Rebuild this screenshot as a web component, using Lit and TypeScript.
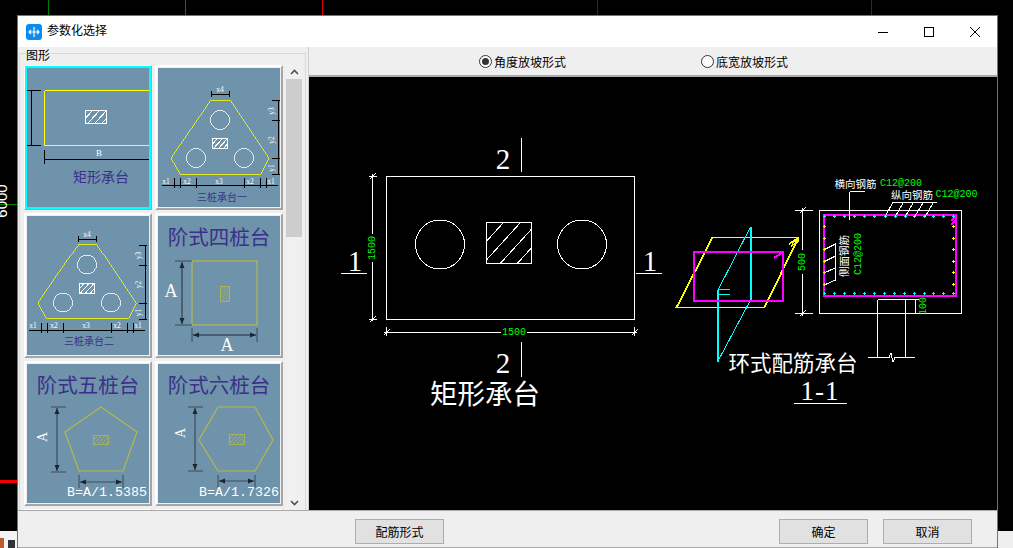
import {css, html, LitElement, svg} from 'lit';
import {customElement, state} from 'lit/decorators.js';

const WHITE = '#fff';
const YELLOW = '#ffff00';
const DIM_YELLOW = '#b4b84c';
const DARK = '#3a4c5a';
const INK = '#3b3189';
const GREEN = '#00ff00';
const CYAN = '#00ffff';
const MAGENTA = '#ff00ff';

const line = (x1: number, y1: number, x2: number, y2: number, c = WHITE, w = 1) =>
  svg`<line x1=${x1} y1=${y1} x2=${x2} y2=${y2} stroke=${c} stroke-width=${w}></line>`;

const box = (x: number, y: number, w: number, h: number, c = WHITE, sw = 1) =>
  svg`<rect x=${x} y=${y} width=${w} height=${h} fill="none" stroke=${c} stroke-width=${sw}></rect>`;

const poly = (points: string, c = WHITE, sw = 1) =>
  svg`<polygon points=${points} fill="none" stroke=${c} stroke-width=${sw}></polygon>`;

const circle = (cx: number, cy: number, r: number, c = WHITE, sw = 1) =>
  svg`<circle cx=${cx} cy=${cy} r=${r} fill="none" stroke=${c} stroke-width=${sw}></circle>`;

// nested svg clips the diagonals to the section rectangle
function hatch(x: number, y: number, w: number, h: number, step: number, c = WHITE, sw = 1) {
  const lines = [];
  for (let i = step; i < w + h; i += step) {
    lines.push(line(i, 0, i - h, h * 1.1, c, sw));
  }
  return svg`<svg x=${x} y=${y} width=${w} height=${h}>${lines}</svg>${box(x, y, w, h, c, sw)}`;
}

const label = (x: number, y: number, text: string, size: number, c: string, cls = 'cjk', rot = false) =>
  svg`<text class=${cls} x=${x} y=${y} font-size=${size} fill=${c} text-anchor="middle" dominant-baseline="central"
    transform=${rot ? `rotate(-90 ${x} ${y})` : ''}>${text}</text>`;

const arrow = (x: number, y: number, dir: 'u' | 'd' | 'l' | 'r') => {
  const p = {
    u: `${x},${y} ${x - 2.5},${y + 6} ${x + 2.5},${y + 6}`,
    d: `${x},${y} ${x - 2.5},${y - 6} ${x + 2.5},${y - 6}`,
    l: `${x},${y} ${x + 6},${y - 2.5} ${x + 6},${y + 2.5}`,
    r: `${x},${y} ${x - 6},${y - 2.5} ${x - 6},${y + 2.5}`,
  }[dir];
  return svg`<polygon points=${p} fill="#1c2630"></polygon>`;
};

const rectTile = svg`
  <g class="crisp">
    ${line(17.5, 22.5, 122, 22.5, YELLOW)}${line(17.5, 22.5, 17.5, 77.5, YELLOW)}${line(17.5, 77.5, 122, 77.5, YELLOW)}
    ${line(0, 22.5, 14, 22.5, '#000')}${line(0, 77.5, 14, 77.5, '#000')}${line(4.5, 22.5, 4.5, 77.5, '#000')}
    ${line(17.5, 82, 17.5, 96, '#000')}${line(17.5, 91.5, 122, 91.5, '#000')}
    ${hatch(58.5, 42.5, 21, 13, 7)}
  </g>
  ${label(72, 85, 'B', 9, WHITE, 'latin')}
  ${label(74, 108, '矩形承台', 14, INK)}
`;

// tiles 2 and 3 share the same three pile plan
const threePile = (title: string, dx: number, dy: number) => svg`
  <g transform="translate(${dx} ${dy})">
    <g class="crisp">
      ${poly('53,32 72,32 111,90 103,106 22,106 13,90', YELLOW, 0.8)}
      ${circle(62, 52, 9.5, WHITE, 0.8)}${circle(38, 90, 9.5, WHITE, 0.8)}${circle(86, 90, 9.5, WHITE, 0.8)}
      ${hatch(54.5, 70.5, 15, 10, 5)}
      ${line(53.5, 26.5, 71.5, 26.5, '#000')}${line(53.5, 23, 53.5, 29, '#000')}${line(71.5, 23, 71.5, 29, '#000')}
      ${line(120.5, 32, 120.5, 106, '#000')}
      ${[32.5, 52.5, 90.5, 106.5].map(y => line(114, y, 122, y, '#000'))}
      ${line(4, 117.5, 120, 117.5, '#000')}
      ${[16.5, 22.5, 38.5, 86.5, 102.5, 108.5].map(x => line(x, 110, x, 120, '#000'))}
    </g>
    ${label(62, 21.5, 'x4', 7.5, WHITE, 'latin')}
    ${label(113.5, 43, 'y3', 7.5, WHITE, 'latin', true)}${label(113.5, 72, 'y2', 7.5, WHITE, 'latin', true)}${label(113.5, 100, 'y1', 7.5, WHITE, 'latin', true)}
    ${label(8, 113, 'x1', 7.5, WHITE, 'latin')}${label(29, 113, 'x2', 7.5, WHITE, 'latin')}${label(61, 113, 'x3', 7.5, WHITE, 'latin')}
    ${label(92, 113, 'x2', 7.5, WHITE, 'latin')}${label(113, 113, 'x1', 7.5, WHITE, 'latin')}
    ${label(64, 128, title, 10, INK)}
  </g>
`;

const stepFour = svg`
  ${label(61, 20, '阶式四桩台', 20.5, INK)}
  ${box(34, 45, 65, 64, DIM_YELLOW, 1.2)}
  ${hatch(62.5, 70.5, 9, 15, 3, DIM_YELLOW, 0.8)}
  ${line(17, 45, 34, 45, DARK)}${line(17, 109, 34, 109, DARK)}${line(24, 46, 24, 108, DARK, 1.4)}
  ${arrow(24, 46, 'u')}${arrow(24, 108, 'd')}
  ${line(34, 112, 34, 126, DARK)}${line(99, 112, 99, 126, DARK)}${line(35, 119, 98, 119, DARK, 1.4)}
  ${arrow(35, 119, 'l')}${arrow(98, 119, 'r')}
  ${label(13, 75, 'A', 18, WHITE, 'latin')}
  ${label(69, 129, 'A', 18, WHITE, 'latin')}
`;

const stepFive = svg`
  ${label(61, 20, '阶式五桩台', 20.5, INK)}
  ${poly('74,43 110,68 96,107 52,107 38,68', DIM_YELLOW, 1.2)}
  ${hatch(66.5, 71.5, 15, 9, 4, DIM_YELLOW, 0.8)}
  ${line(24, 43, 39, 43, DARK)}${line(24, 108, 39, 108, DARK)}${line(30, 44, 30, 107, DARK, 1.2)}
  ${arrow(30, 44, 'u')}${arrow(30, 107, 'd')}
  ${line(52, 111, 52, 124, DARK)}${line(96, 111, 96, 124, DARK)}${line(53, 118, 95, 118, DARK, 1.2)}
  ${arrow(53, 118, 'l')}${arrow(95, 118, 'r')}
  ${label(15, 73, 'A', 14, WHITE, 'latin', true)}
  ${label(80, 128, 'B=A/1.5385', 13.3, WHITE, 'mono')}
`;

const stepSix = svg`
  ${label(61, 20, '阶式六桩台', 20.5, INK)}
  ${poly('60,43 97,43 115,76 97,107 60,107 41,76', DIM_YELLOW, 1.2)}
  ${hatch(71.5, 70.5, 15, 10, 4, DIM_YELLOW, 0.8)}
  ${line(30, 43, 45, 43, DARK)}${line(30, 107, 45, 107, DARK)}${line(37, 44, 37, 106, DARK, 1.2)}
  ${arrow(37, 44, 'u')}${arrow(37, 106, 'd')}
  ${line(60, 111, 60, 124, DARK)}${line(97, 111, 97, 124, DARK)}${line(61, 117, 96, 117, DARK, 1.2)}
  ${arrow(61, 117, 'l')}${arrow(96, 117, 'r')}
  ${label(22, 69, 'A', 14, WHITE, 'latin', true)}
  ${label(81, 128, 'B=A/1.7326', 13.3, WHITE, 'mono')}
`;

const tiles = [
  rectTile,
  threePile('三桩承台一', 0, 0),
  threePile('三桩承台二', -2, -3.5),
  stepFour,
  stepFive,
  stepSix,
  svg``,
  svg``,
];

const dimTick = (x: number, y: number) => line(x - 3, y + 3, x + 3, y - 3);

const capPlan = svg`
  ${box(386.5, 176.5, 248, 143)}
  ${circle(440, 244.5, 24.5)}${circle(582, 244.5, 24.5)}
  ${hatch(486.5, 222.5, 45, 41, 17)}
  ${line(521.5, 138, 521.5, 172)}${line(521.5, 342, 521.5, 377)}
  ${line(341, 273.5, 367, 273.5)}${line(636, 273.5, 662, 273.5)}
  ${line(372.5, 174, 372.5, 321)}${line(369, 176.5, 377, 176.5)}${line(369, 319.5, 377, 319.5)}
  ${dimTick(372.5, 176.5)}${dimTick(372.5, 319.5)}
  ${line(384, 332.5, 637, 332.5)}${line(386.5, 327, 386.5, 336)}${line(634.5, 327, 634.5, 336)}
  ${dimTick(386.5, 332.5)}${dimTick(634.5, 332.5)}
  <rect x="367" y="234" width="11" height="28" fill="#000"></rect>
  <rect x="501" y="326" width="26" height="12" fill="#000"></rect>
`;

const capLabels = svg`
  ${label(372, 248, '1500', 10, GREEN, 'mono', true)}
  ${label(514, 332, '1500', 10, GREEN, 'mono')}
  ${label(503, 159, '2', 29, WHITE, 'latin')}
  ${label(503, 363, '2', 29, WHITE, 'latin')}
  ${label(355, 261, '1', 29, WHITE, 'latin')}
  ${label(650, 261, '1', 29, WHITE, 'latin')}
  ${label(485, 392, '矩形承台', 27.5, WHITE)}
`;

const topBars = [464, 493, 523, 553, 583, 613, 645, 675, 705, 733, 762, 790, 820, 850];
const bottomBars = [464, 493, 523, 553, 583, 613, 643, 673, 703, 733, 763, 790, 820, 850];
const sideBars = [170, 205, 238, 274, 307, 343];

const bar = (x: number, y: number, c: string) => svg`${line(x - 1.5, y, x + 1.5, y, c)}${line(x, y - 1.5, x, y + 1.5, c)}`;

const ringIso = svg`
  ${poly('712.5,237.5 798.5,237.5 764.5,307.5 676.5,307.5', YELLOW, 1.8)}
  ${line(789, 244, 798, 238, YELLOW, 1.5)}${line(791, 246, 799, 241, YELLOW, 1.5)}${line(792, 243, 798, 239, YELLOW, 1.5)}
  ${line(750.5, 227, 718, 290, CYAN)}${line(750.5, 227, 750.5, 301, CYAN, 2)}
  ${line(717.5, 290, 717.5, 362, CYAN, 2)}${line(717.5, 362, 750, 301, CYAN)}
  ${line(718, 289.5, 730, 289.5, CYAN, 1.5)}${line(718, 294.5, 730, 294.5, CYAN, 1.5)}
  ${box(694, 252, 89, 49, MAGENTA, 2)}
  ${line(774, 258, 782, 253, MAGENTA, 2)}
`;

const ringSection = svg`
  ${box(819.5, 210.5, 142, 103)}
  ${box(824, 215, 132, 81, MAGENTA, 2)}
  ${line(951, 221, 956, 216, MAGENTA, 2)}${line(951, 225, 956, 220, MAGENTA, 2)}
  ${topBars.map(x => bar(670 + x / 3, 216.5, CYAN))}
  ${bottomBars.map(x => bar(670 + x / 3, 293.5, CYAN))}
  ${sideBars.map(y => bar(824.5, 170 + y / 3, YELLOW))}
  ${sideBars.map(y => bar(953.5, 170 + y / 3, YELLOW))}
  ${line(877.5, 299.5, 905.5, 299.5)}${line(877.5, 299.5, 877.5, 357)}${line(905.5, 299.5, 905.5, 357)}
  ${line(868, 357.5, 889, 357.5)}${line(889, 357.5, 891, 353)}${line(891, 353, 893, 362)}${line(893, 362, 895, 357.5)}${line(895, 357.5, 915, 357.5)}
  ${line(802.5, 208, 802.5, 316)}${line(795, 210.5, 813, 210.5)}${line(795, 313.5, 813, 313.5)}
  ${dimTick(802.5, 210.5)}${dimTick(802.5, 313.5)}
  <rect x="796" y="250" width="13" height="24" fill="#000"></rect>
  ${line(915.5, 299, 915.5, 314)}${line(906, 299.5, 919, 299.5)}
  ${line(849.5, 220, 849.5, 191.5)}${line(849.5, 191.5, 865, 191.5)}
  ${line(892.5, 202.5, 937, 202.5)}
  ${[[668, 645], [700, 675], [730, 705], [760, 733], [790, 765]].map(([a, b]) => line(670 + a / 3, 202.5, 670 + b / 3, 217))}
  ${line(835.5, 243, 835.5, 280)}
  ${[[222, 238], [258, 274], [293, 308], [330, 344]].map(([a, b]) => line(835.5, 170 + a / 3, 825, 170 + b / 3))}
`;

const ringLabels = svg`
  ${label(855.5, 183, '横向钢筋', 10.5, WHITE)}
  ${label(901, 183, 'C12@200', 10, GREEN, 'mono')}
  ${label(912, 194, '纵向钢筋', 10.5, WHITE)}
  ${label(956.5, 194, 'C12@200', 10, GREEN, 'mono')}
  ${label(843.5, 256, '侧面钢筋', 10.5, WHITE, 'cjk', true)}
  ${label(858.5, 254, 'C12@200', 10, GREEN, 'mono', true)}
  ${label(802, 262, '500', 10, GREEN, 'mono', true)}
  ${label(923, 306, '100', 10, GREEN, 'mono', true)}
  ${label(793, 361, '环式配筋承台', 21.5, WHITE)}
  ${label(820, 391, '1-1', 27, WHITE, 'wide')}
`;

@customElement('app-root')
export class AppRoot extends LitElement {
  @state()
  private selected = 0;

  @state()
  private mode = 0;

  static override styles = css`
    :host {
      display: block;
      position: relative;
      width: 1013px;
      height: 548px;
      overflow: hidden;
      background: #000;
      font-family: 'Noto Sans CJK SC', 'Liberation Sans', sans-serif;
      font-size: 12px;
      color: #000;
    }

    .desktop {
      position: absolute;
      inset: 0;
    }

    .cjk {
      font-family: 'Noto Sans CJK SC', sans-serif;
    }

    .latin {
      font-family: 'Liberation Serif', serif;
    }

    .wide {
      font-family: 'Liberation Serif', serif;
      letter-spacing: 1px;
    }

    .mono {
      font-family: 'Liberation Mono', monospace;
    }

    .sans {
      font-family: 'Liberation Sans', sans-serif;
    }

    .crisp {
      shape-rendering: crispEdges;
    }

    .window {
      position: absolute;
      left: 17px;
      top: 15px;
      width: 981px;
      height: 533px;
      box-sizing: border-box;
      border: 1px solid #2f86c8;
      border-bottom: none;
      background: #efefef;
      display: flex;
      flex-direction: column;
    }

    .titlebar {
      flex: none;
      height: 31px;
      background: #fff;
      display: flex;
      align-items: center;
      padding-left: 8px;
      box-sizing: border-box;
    }

    .app-icon {
      flex: none;
      width: 16px;
      height: 16px;
      margin-right: 5px;
    }

    .title {
      flex: 1;
      font-size: 12px;
      line-height: 14px;
      padding-bottom: 4px;
    }

    .controls {
      display: flex;
      align-items: center;
      padding-right: 16px;
      gap: 34px;
    }

    .controls svg {
      display: block;
      width: 12px;
      height: 12px;
    }

    .main {
      flex: none;
      height: 463px;
      display: grid;
      grid-template-columns: 290px 1fr;
    }

    .left {
      display: flex;
      min-height: 0;
      padding: 6px 2px 0 1px;
    }

    .group {
      flex: 1;
      min-width: 0;
      position: relative;
      border: 1px solid #d9d9d9;
      border-bottom: none;
      display: flex;
      flex-direction: column;
      padding: 0 2px 0 4px;
    }

    .group-label {
      position: absolute;
      left: 6px;
      top: -6px;
      background: #efefef;
      font-size: 12px;
      line-height: 13px;
      padding-right: 1px;
    }

    .picker {
      flex: 1;
      min-height: 0;
      display: flex;
      margin-top: 11px;
    }

    .list {
      flex: none;
      width: 259px;
      height: 445px;
      overflow: hidden;
      display: grid;
      grid-template-columns: 128px 128px;
      grid-auto-rows: 145px;
      gap: 3px;
      align-content: start;
    }

    .tile {
      box-sizing: border-box;
      padding: 1px;
      border: 2px solid;
      border-color: #fff #a6a6a6 #a6a6a6 #fff;
      background: #efefef;
      cursor: pointer;
    }

    .plate {
      display: block;
      width: 122px;
      height: 139px;
      background: #6e93aa;
    }

    .tile.on .plate {
      box-shadow: 0 0 0 2px #00ffff;
    }

    .scrollbar {
      flex: none;
      width: 16px;
      margin-left: 3px;
      height: 445px;
      display: flex;
      flex-direction: column;
      background: #f0f0f0;
    }

    .scroll-btn {
      flex: none;
      height: 14px;
      display: flex;
      align-items: center;
      justify-content: center;
    }

    .thumb {
      flex: none;
      height: 158px;
      background: #cdcdcd;
    }

    .scroll-track {
      flex: 1;
    }

    .right {
      display: flex;
      flex-direction: column;
      min-width: 0;
      border-left: 1px solid #cfcfcf;
    }

    .modes {
      flex: none;
      height: 30px;
      box-sizing: border-box;
      display: flex;
      align-items: center;
      padding: 1px 0 0 170px;
      gap: 134px;
      border-bottom: 2px solid #a9a9a9;
      font-size: 12px;
    }

    .radio {
      display: flex;
      align-items: center;
      gap: 2px;
      width: 88px;
      white-space: nowrap;
      cursor: pointer;
    }

    .dot {
      flex: none;
      box-sizing: border-box;
      width: 13px;
      height: 13px;
      border-radius: 50%;
      border: 1px solid #333;
      background: #fff;
      display: flex;
      align-items: center;
      justify-content: center;
    }

    .radio.on .dot::after {
      content: '';
      width: 7px;
      height: 7px;
      border-radius: 50%;
      background: #333;
    }

    .canvas {
      flex: 1;
      min-height: 0;
      display: block;
      width: 688px;
      background: #000;
    }

    .footer {
      flex: 1;
      border-top: 1px solid #a9a9a9;
      border-bottom: 1px solid #a9a9a9;
      display: flex;
      align-items: flex-start;
      padding: 8px 0 0 337px;
    }

    .footer button {
      width: 89px;
      height: 25px;
      box-sizing: border-box;
      border: 1px solid #adadad;
      background: #e1e1e1;
      font: inherit;
      font-size: 12px;
      color: #000;
      padding: 0;
    }

    .footer .ok {
      margin-left: 335px;
    }

    .footer .cancel {
      margin-left: 15px;
    }
  `;

  private renderDesktop() {
    return html`<svg class="desktop" width="1013" height="548" viewBox="0 0 1013 548">
      <g class="crisp">
        ${line(48.5, 0, 48.5, 15, '#008000')}${line(185.5, 0, 185.5, 15, '#008000')}
        ${line(322.5, 0, 322.5, 15, '#e00000')}${line(597.5, 0, 597.5, 15, '#900000')}${line(871.5, 0, 871.5, 15, '#900000')}
        ${line(0, 204.5, 17, 204.5, '#008000')}
        ${line(0, 481, 17, 481, '#f00000', 3)}
        <rect x="0" y="531" width="17" height="17" fill="#f4f4f4"></rect>
        <rect x="998" y="531" width="15" height="17" fill="#efefef"></rect>
      </g>
      <rect x="0" y="538" width="4" height="10" fill="#c05a30"></rect>
      <rect x="8" y="540" width="7" height="8" fill="#333"></rect>
      <text x="7" y="201" class="sans" font-size="15" fill="#fff" text-anchor="middle"
        transform="rotate(-90 7 201)">6000</text>
    </svg>`;
  }

  private renderTitlebar() {
    return html`<div class="titlebar">
      <svg class="app-icon" viewBox="0 0 16 16">
        <rect width="16" height="16" rx="3" fill="#0a8cf0"></rect>
        <path d="M8 3v10M3 8h10M5 6 3 8l2 2M11 6l2 2-2 2" fill="none" stroke="#fff" stroke-width="1.2"></path>
      </svg>
      <span class="title">参数化选择</span>
      <div class="controls">
        <svg viewBox="0 0 12 12"><path d="M1 6.5h10" stroke="#000"></path></svg>
        <svg viewBox="0 0 12 12"><rect x="1.5" y="1.5" width="9" height="9" fill="none" stroke="#000"></rect></svg>
        <svg viewBox="0 0 12 12"><path d="M1 1l10 10M11 1 1 11" stroke="#000" fill="none"></path></svg>
      </div>
    </div>`;
  }

  private renderPicker() {
    return html`<div class="left">
      <div class="group">
        <span class="group-label">图形</span>
        <div class="picker">
          <div class="list">
            ${tiles.map((t, i) => html`
              <div class="tile ${this.selected === i ? 'on' : ''}" @click=${() => { this.selected = i; }}>
                <svg class="plate" viewBox="0 0 122 139">${t}</svg>
              </div>`)}
          </div>
          <div class="scrollbar">
            <div class="scroll-btn">
              <svg width="9" height="6" viewBox="0 0 9 6"><path d="M1 5l3.5-3.5L8 5" fill="none" stroke="#505050" stroke-width="1.6"></path></svg>
            </div>
            <div class="thumb"></div>
            <div class="scroll-track"></div>
            <div class="scroll-btn">
              <svg width="9" height="6" viewBox="0 0 9 6"><path d="M1 1l3.5 3.5L8 1" fill="none" stroke="#505050" stroke-width="1.6"></path></svg>
            </div>
          </div>
        </div>
      </div>
    </div>`;
  }

  private renderPreview() {
    const modes = ['角度放坡形式', '底宽放坡形式'];
    return html`<div class="right">
      <div class="modes">
        ${modes.map((m, i) => html`
          <label class="radio ${this.mode === i ? 'on' : ''}" @click=${() => { this.mode = i; }}>
            <span class="dot"></span>${m}
          </label>`)}
      </div>
      <svg class="canvas" viewBox="309 77 688 433">
        <g class="crisp">${capPlan}${ringIso}${ringSection}</g>
        ${capLabels}${ringLabels}
        ${line(794, 403.5, 847, 403.5)}
      </svg>
    </div>`;
  }

  override render() {
    return html`
      ${this.renderDesktop()}
      <div class="window">
        ${this.renderTitlebar()}
        <div class="main">
          ${this.renderPicker()}
          ${this.renderPreview()}
        </div>
        <div class="footer">
          <button>配筋形式</button>
          <button class="ok">确定</button>
          <button class="cancel">取消</button>
        </div>
      </div>
    `;
  }
}

declare global {
  interface HTMLElementTagNameMap {
    'app-root': AppRoot;
  }
}
